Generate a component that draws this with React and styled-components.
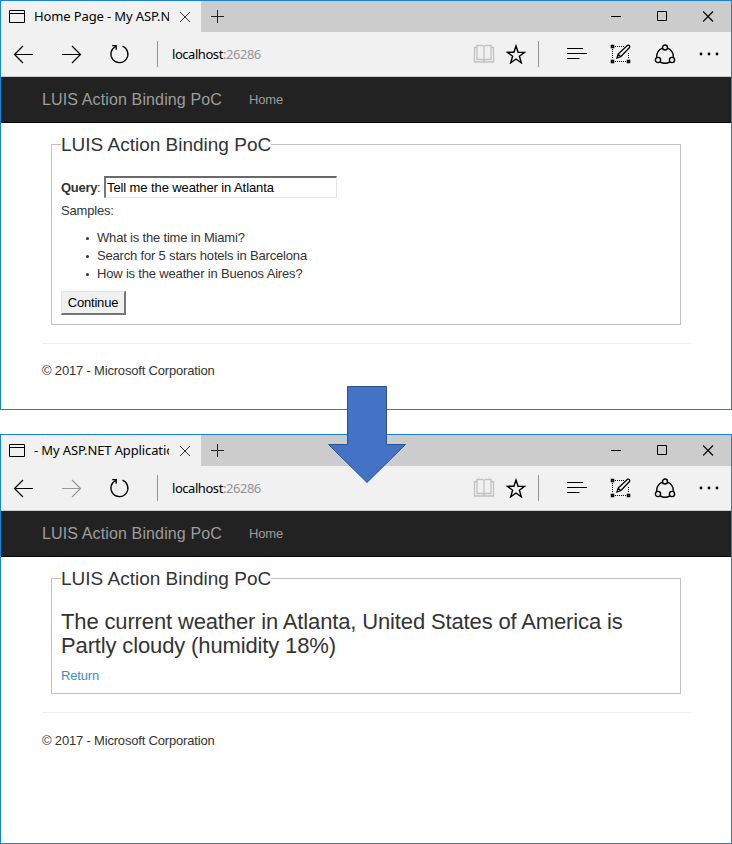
import React from "react";
import styled, { createGlobalStyle } from "styled-components";

const Global = createGlobalStyle`
  * { box-sizing: border-box; }
  body { margin: 0; background: #fff; }
`;

const Page = styled.main`
  position: relative;
  width: 732px;
  height: 844px;
  display: flex;
  flex-direction: column;
  gap: 24px;
  overflow: hidden;
  font-family: "Liberation Sans", Arial, sans-serif;
  font-size: 13px;
  letter-spacing: -0.18px;
  color: #333;
`;

const BrowserWindow = styled.section`
  height: 410px;
  flex: none;
  border: 1px solid #1883d7;
  background: #fff;
`;

const TitleBar = styled.header`
  display: flex;
  height: 31px;
  background: #ccc;
  font-family: "Noto Sans", sans-serif;
  color: #000;
`;

const Tab = styled.div`
  display: flex;
  align-items: center;
  width: 200px;
  height: 31px;
  padding-left: 8px;
  background: #f1f1f1;
`;

const TabTitle = styled.span`
  width: 135px;
  margin: 0 10px 0 9px;
  padding-bottom: 2px;
  overflow: hidden;
  white-space: nowrap;
  font-size: 13px;
  line-height: 28px;
  letter-spacing: -0.12px;
`;

const NewTab = styled.div`
  display: flex;
  align-items: center;
  margin-left: 10px;
`;

const WindowControls = styled.div`
  display: flex;
  align-items: center;
  gap: 35px;
  margin-left: auto;
  padding-right: 17px;
`;

const Toolbar = styled.div`
  display: flex;
  align-items: center;
  height: 45px;
  padding-left: 12px;
  background: #f1f1f1;
  border-bottom: 1px solid #ccc;
`;

const NavButtons = styled.div`
  display: flex;
  gap: 26px;
  margin-right: 26px;
`;

const Separator = styled.span`
  width: 1px;
  height: 26px;
  background: #949494;
`;

const Address = styled.div`
  width: 301px;
  margin-left: 14px;
  font: 13px/20px "Noto Sans", sans-serif;
  letter-spacing: -0.45px;
  color: #000;
`;

const Port = styled.span`
  color: #959595;
`;

const PageActions = styled.div`
  display: flex;
  gap: 10px;
  margin-right: 11px;
`;

const BrowserActions = styled.div`
  display: flex;
  gap: 22px;
  margin-left: 27px;
`;

const Icon = styled.svg`
  display: block;
  flex: none;
  fill: none;
  stroke: ${(p) => p.$color || "#000"};
  stroke-width: ${(p) => p.$weight || 1};
`;

const SiteNav = styled.nav`
  display: flex;
  align-items: center;
  height: 46px;
  padding: 0 0 0 41px;
  background: #222;
  border-bottom: 1px solid #080808;
  color: #9d9d9d;
`;

const Brand = styled.span`
  width: 207px;
  font-size: 16px;
  letter-spacing: 0.13px;
  white-space: nowrap;
`;

const NavLink = styled.span`
  font-size: 13px;
`;

const Content = styled.div`
  padding: 10px 41px 0;
`;

const Panel = styled.fieldset`
  height: ${(p) => p.$height}px;
  margin: 0 9px;
  padding: 0 9px;
  border: 1px solid #c0c0c0;
`;

const Legend = styled.legend`
  height: 23px;
  padding: 0;
  font-size: 19px;
  letter-spacing: 0;
  line-height: 23px;
`;

const QueryRow = styled.div`
  display: flex;
  align-items: center;
  margin-top: 20px;
`;

const QueryLabel = styled.label`
  width: 43px;
  white-space: nowrap;
  letter-spacing: -0.3px;
`;

const QueryInput = styled.input`
  width: 233px;
  height: 22px;
  padding: 0 1px;
  border: solid;
  border-color: #696969 #e3e3e3 #e3e3e3 #767676;
  border-width: 2px 1px 1px 2px;
  font: 13px "Liberation Sans", Arial, sans-serif;
  letter-spacing: -0.1px;
  color: #000;
  background: #fff;
`;

const Samples = styled.p`
  margin: 4px 0 9px;
  line-height: 18px;
`;

const SampleList = styled.ul`
  margin: 0 0 8px;
  padding: 0;
  list-style: none;
`;

const Sample = styled.li`
  display: flex;
  align-items: center;
  padding-left: 25px;
  line-height: 18px;

  &::before {
    content: "";
    width: 3px;
    height: 3px;
    margin-right: 8px;
    border-radius: 50%;
    background: #333;
  }
`;

const SubmitButton = styled.button`
  display: block;
  width: 65px;
  height: 24px;
  padding: 0;
  border: solid;
  border-width: 1px 2px 2px 1px;
  border-color: #e3e3e3 #767676 #767676 #e3e3e3;
  background: #f0f0f0;
  font: 13px "Liberation Sans", Arial, sans-serif;
  letter-spacing: -0.2px;
  color: #000;
`;

const Result = styled.h3`
  margin: 20px 0 9px;
  font-size: 22px;
  letter-spacing: -0.14px;
  font-weight: 400;
  line-height: 24px;
  white-space: nowrap;
`;

const ReturnLink = styled.a`
  color: #428bca;
  line-height: 18px;
`;

const Footer = styled.footer`
  margin-top: 18px;
  padding-top: ${(p) => p.$gap}px;
  border-top: 1px solid #eee;
  line-height: 20px;
`;

const FlowArrow = styled.svg`
  position: absolute;
  left: 327px;
  top: 385px;
`;

const SAMPLES = [
  "What is the time in Miami?",
  "Search for 5 stars hotels in Barcelona",
  "How is the weather in Buenos Aires?",
];

function Browser({ title, canGoForward, footerGap, children }) {
  return (
    <BrowserWindow>
      <TitleBar>
        <Tab>
          <Icon width="16" height="13" viewBox="0 0 16 13">
            <path d="M.5.5h15v12H.5zM.5 3.5h15" />
          </Icon>
          <TabTitle>{title}</TabTitle>
          <Icon width="12" height="12" viewBox="0 0 12 12" $color="#333">
            <path d="m1 1 10 10M11 1 1 11" />
          </Icon>
        </Tab>
        <NewTab>
          <Icon width="13" height="13" viewBox="0 0 13 13" $color="#222">
            <path d="M0 6.5h13M6.5 0v13" />
          </Icon>
        </NewTab>
        <WindowControls>
          <Icon width="11" height="11" viewBox="0 0 11 11">
            <path d="M0 5.5h10" />
          </Icon>
          <Icon width="11" height="11" viewBox="0 0 11 11">
            <path d="M.5.5h9v9h-9z" />
          </Icon>
          <Icon width="11" height="11" viewBox="0 0 11 11" $weight={1.2}>
            <path d="m0 .5 10 10M10 .5l-10 10" />
          </Icon>
        </WindowControls>
      </TitleBar>
      <Toolbar>
        <NavButtons>
          <Icon width="22" height="20" viewBox="0 0 22 20" $weight={1.2}>
            <path d="M20 10.5H1.5M10 2l-8.500 8.500L10 19" />
          </Icon>
          <Icon
            width="22"
            height="20"
            viewBox="0 0 22 20"
            $weight={1.2}
            $color={canGoForward ? "#000" : "#999"}
          >
            <path d="M1 10.5h18.500M11 2l8.500 8.500L11 19" />
          </Icon>
          <Icon width="22" height="20" viewBox="0 0 22 20" $weight={1.3}>
            <path d="M13.500 2.200A8.500 8.500 0 1 1 6.600 2.500M3.200 1.700h4v4" />
          </Icon>
        </NavButtons>
        <Separator />
        <Address>
          localhost<Port>:26286</Port>
        </Address>
        <PageActions>
          <Icon width="22" height="20" viewBox="0 0 22 20" $color="#c2c2c2" $weight={1.3}>
            <path d="M4 1.500H9.500L11 2.500l1.500-1h5.500v14h-5.500L11 16.500l-1.500-1H4zM11 2.500v15.500M4 3.500H1.500v14.500h19V3.500H18" />
          </Icon>
          <Icon width="22" height="20" viewBox="0 0 22 20" $weight={1.4}>
            <path d="m11 2 2.100 6.200 6.400.1-5.100 4 1.900 6.500L11 15l-5.300 3.800 1.900-6.500-5.100-4 6.400-.1z" />
          </Icon>
        </PageActions>
        <Separator />
        <BrowserActions>
          <Icon width="22" height="20" viewBox="0 0 22 20">
            <path d="M1 4.5h16M1 9.5h20M1 14.5h12.500" />
          </Icon>
          <Icon width="22" height="20" viewBox="0 0 22 20">
            <path d="M5 2.500h9M2.500 5v10M18.500 9v6M5 17.500h11" strokeDasharray="1 1" />
            <path d="M1.500 1.500h2v2h-2zM1.500 16.500h2v2h-2zM17.500 16.500h2v2h-2z" strokeWidth="1.5" />
            <path
              d="m7 14 1.200-4L17.500 1.300c1.500-.7 2.800.7 2 2.200L11 12.500zM8.300 10.200l2.500 2.400"
              strokeWidth="1.300"
            />
          </Icon>
          <Icon width="22" height="20" viewBox="0 0 22 20" $weight={1.4}>
            <circle cx="11" cy="3.500" r="2.500" />
            <circle cx="4" cy="16" r="2.600" />
            <circle cx="18" cy="16" r="2.600" />
            <path d="M8.500 4.200A8.300 8.300 0 0 0 2.900 13.600M13.500 4.200A8.300 8.300 0 0 1 19.100 13.600M6 17.800q5 3 10 0" />
          </Icon>
          <Icon width="22" height="20" viewBox="0 0 22 20">
            <g fill="#000" stroke="none">
              <circle cx="3" cy="10" r="1.400" />
              <circle cx="11" cy="10" r="1.400" />
              <circle cx="19" cy="10" r="1.400" />
            </g>
          </Icon>
        </BrowserActions>
      </Toolbar>
      <SiteNav>
        <Brand>LUIS Action Binding PoC</Brand>
        <NavLink>Home</NavLink>
      </SiteNav>
      <Content>
        {children}
        <Footer $gap={footerGap}>© 2017 - Microsoft Corporation</Footer>
      </Content>
    </BrowserWindow>
  );
}

export default function App() {
  return (
    <Page>
      <Global />
      <Browser title="Home Page - My ASP.N" footerGap={17} canGoForward>
        <Panel $height={192}>
          <Legend>LUIS Action Binding PoC</Legend>
          <QueryRow>
            <QueryLabel htmlFor="query">
              <b>Query</b>:
            </QueryLabel>
            <QueryInput id="query" defaultValue="Tell me the weather in Atlanta" />
          </QueryRow>
          <Samples>Samples:</Samples>
          <SampleList>
            {SAMPLES.map((s) => (
              <Sample key={s}>{s}</Sample>
            ))}
          </SampleList>
          <SubmitButton type="button">Continue</SubmitButton>
        </Panel>
      </Browser>
      <Browser title=" - My ASP.NET Application" footerGap={18}>
        <Panel $height={127}>
          <Legend>LUIS Action Binding PoC</Legend>
          <Result>
            The current weather in Atlanta, United States of America is
            <br />
            Partly cloudy (humidity 18%)
          </Result>
          <ReturnLink>Return</ReturnLink>
        </Panel>
      </Browser>
      <FlowArrow width="80" height="99" viewBox="0 0 80 99">
        <path d="M20.500 1.500h39v58H78.500L40 97.500 1.500 59.500h19z" fill="#4472c4" stroke="#2f528f" />
      </FlowArrow>
    </Page>
  );
}
